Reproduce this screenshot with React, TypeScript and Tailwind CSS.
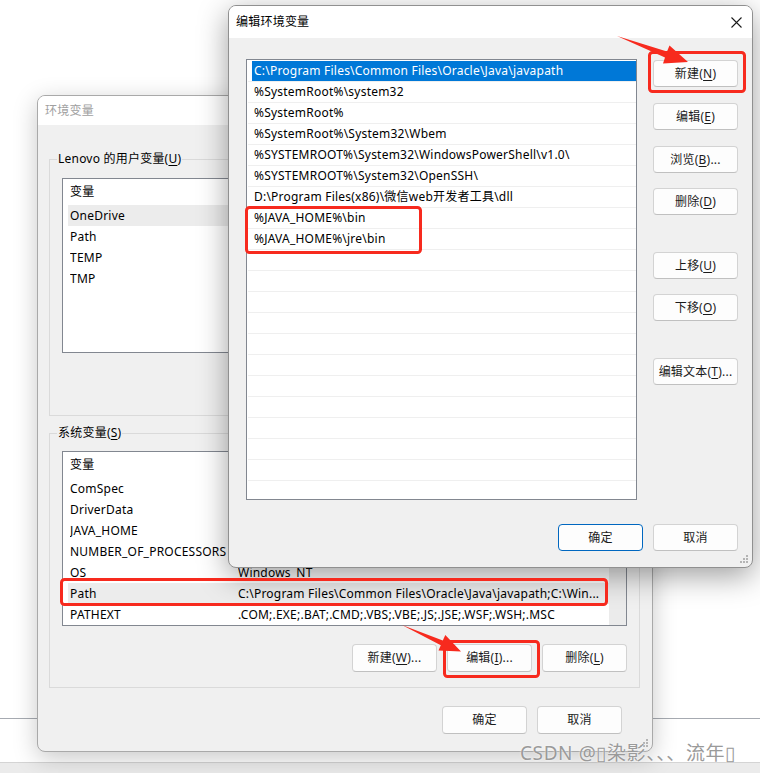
import type { ReactNode } from 'react';

function Key({ children }: { children: ReactNode }) {
  return <span className="underline underline-offset-[2px]">{children}</span>;
}

function Btn({
  children,
  primary = false,
  tall = false,
}: {
  children: ReactNode;
  primary?: boolean;
  tall?: boolean;
}) {
  return (
    <button
      className={`flex w-[85px] shrink-0 items-center justify-center rounded-[4px] border bg-[#fdfdfd] text-[12px] text-[#1b1b1b] ${
        tall ? 'h-[28px]' : 'h-[27px]'
      } ${primary ? 'border-[#0067c0]' : 'border-[#d3d3d3] border-b-[#c0c0c0]'}`}
    >
      {children}
    </button>
  );
}

function Grip() {
  return (
    <svg className="absolute right-[3px] bottom-[3px]" width="9" height="9" viewBox="0 0 9 9">
      {[
        [7, 1],
        [4, 4],
        [7, 4],
        [1, 7],
        [4, 7],
        [7, 7],
      ].map(([x, y]) => (
        <rect key={`${x}-${y}`} x={x - 1} y={y - 1} width="2" height="2" fill="#b4b4b4" />
      ))}
    </svg>
  );
}

// values under the edit dialog are not visible, so they are left out
const userVars = [
  { name: 'OneDrive', value: '', selected: true },
  { name: 'Path', value: '' },
  { name: 'TEMP', value: '' },
  { name: 'TMP', value: '' },
];

const systemVars = [
  { name: 'ComSpec', value: '' },
  { name: 'DriverData', value: '' },
  { name: 'JAVA_HOME', value: '' },
  { name: 'NUMBER_OF_PROCESSORS', value: '' },
  { name: 'OS', value: 'Windows_NT' },
  {
    name: 'Path',
    value: 'C:\\Program Files\\Common Files\\Oracle\\Java\\javapath;C:\\Win...',
    selected: true,
  },
  { name: 'PATHEXT', value: '.COM;.EXE;.BAT;.CMD;.VBS;.VBE;.JS;.JSE;.WSF;.WSH;.MSC' },
];

const paths = [
  'C:\\Program Files\\Common Files\\Oracle\\Java\\javapath',
  '%SystemRoot%\\system32',
  '%SystemRoot%',
  '%SystemRoot%\\System32\\Wbem',
  '%SYSTEMROOT%\\System32\\WindowsPowerShell\\v1.0\\',
  '%SYSTEMROOT%\\System32\\OpenSSH\\',
  'D:\\Program Files(x86)\\微信web开发者工具\\dll',
  '%JAVA_HOME%\\bin',
  '%JAVA_HOME%\\jre\\bin',
];

function VarList({
  rows,
  scrollbar = false,
}: {
  rows: { name: string; value: string; selected?: boolean }[];
  scrollbar?: boolean;
}) {
  return (
    <div className="flex h-[175px] border border-[#828790] bg-white">
      <div className="ml-[5px] flex min-w-0 flex-1 flex-col">
        <div className="flex h-[26px] shrink-0 items-center pl-[2px]">
          <span className="w-[168px]">变量</span>
        </div>
        {rows.map((r) => (
          <div
            key={r.name}
            className={`flex h-[21px] shrink-0 items-center pl-[2px] whitespace-nowrap ${
              r.selected ? 'bg-[#ececec]' : ''
            }`}
          >
            <span className="w-[168px] shrink-0 overflow-hidden">{r.name}</span>
            <span className="overflow-hidden">{r.value}</span>
          </div>
        ))}
      </div>
      {scrollbar && <div className="w-[17px] shrink-0 bg-[#ebebeb]" />}
    </div>
  );
}

function EnvDialog() {
  return (
    <div className="absolute top-[95px] left-[37px] flex h-[657px] w-[616px] flex-col overflow-hidden rounded-[8px] border border-[#a9a9a9] bg-[#f0f0f0] shadow-[0_6px_24px_rgba(0,0,0,0.22)]">
      <div className="flex h-[29px] shrink-0 items-center bg-white pl-[7px] text-[#a0a0a0]">环境变量</div>
      <div className="flex flex-col pt-[26px] pr-[12px] pl-[11px]">
        <fieldset className="min-w-0 border border-[#dadada] px-[12px] pb-[17px]">
          <legend className="-ml-[5px] px-[1px] leading-[16px]">
            Lenovo 的用户变量(<Key>U</Key>)
          </legend>
          <div className="mt-[11px]">
            <VarList rows={userVars} />
          </div>
          <div className="mt-[17px] flex justify-end gap-[10px]">
            <Btn tall>
              新建(<Key>N</Key>)...
            </Btn>
            <Btn tall>
              编辑(<Key>E</Key>)...
            </Btn>
            <Btn tall>
              删除(<Key>D</Key>)
            </Btn>
          </div>
        </fieldset>
        <fieldset className="mt-[9px] min-w-0 border border-[#dadada] px-[12px] pb-[15px]">
          <legend className="-ml-[5px] px-[1px] leading-[16px]">
            系统变量(<Key>S</Key>)
          </legend>
          <div className="mt-[10px]">
            <VarList rows={systemVars} scrollbar />
          </div>
          <div className="mt-[18px] flex justify-end gap-[10px]">
            <Btn tall>
              新建(<Key>W</Key>)...
            </Btn>
            <Btn tall>
              编辑(<Key>I</Key>)...
            </Btn>
            <Btn tall>
              删除(<Key>L</Key>)
            </Btn>
          </div>
        </fieldset>
        <div className="mt-[18px] flex justify-end gap-[10px] pr-[18px]">
          <Btn tall>确定</Btn>
          <Btn tall>取消</Btn>
        </div>
      </div>
      <Grip />
    </div>
  );
}

function EditDialog() {
  const empty = Array.from({ length: 11 }, (_, i) => i);
  return (
    <div className="absolute top-[5px] left-[228px] flex h-[563px] w-[525px] flex-col overflow-hidden rounded-[8px] border border-[#909090] bg-[#f0f0f0] shadow-[0_8px_30px_rgba(0,0,0,0.38)]">
      <div className="flex h-[32px] shrink-0 items-center justify-between bg-white pr-[9px] pl-[7px]">
        <span>编辑环境变量</span>
        <svg width="11" height="11" viewBox="0 0 11 11" className="mr-[1px]">
          <path d="M0.5 0.5 L10.5 10.5 M10.5 0.5 L0.5 10.5" stroke="#1b1b1b" strokeWidth="1.1" />
        </svg>
      </div>
      <div className="flex flex-col pt-[21px] pr-[14px] pl-[17px]">
        <div className="flex gap-[16px]">
          <div className="h-[441px] w-[391px] shrink-0 border border-[#828790] bg-white pt-[1px] pl-[1px]">
            {paths.map((p, i) => (
              <div key={p} className="h-[21px] border-b border-[#efefef]">
                {i === 0 ? (
                  <div className="ml-[4px] h-[20px] bg-[#0078d7] pl-[2px] leading-[20px] whitespace-nowrap text-white">{p}</div>
                ) : (
                  <div className="pl-[6px] leading-[20px] whitespace-nowrap">{p}</div>
                )}
              </div>
            ))}
            {empty.map((i) => (
              <div key={i} className="h-[21px] border-b border-[#efefef]" />
            ))}
          </div>
          <div className="mt-[1px] flex flex-col">
            <Btn>
              新建(<Key>N</Key>)
            </Btn>
            <div className="mt-[16px]">
              <Btn>
                编辑(<Key>E</Key>)
              </Btn>
            </div>
            <div className="mt-[16px]">
              <Btn>
                浏览(<Key>B</Key>)...
              </Btn>
            </div>
            <div className="mt-[15px]">
              <Btn>
                删除(<Key>D</Key>)
              </Btn>
            </div>
            <div className="mt-[37px]">
              <Btn>
                上移(<Key>U</Key>)
              </Btn>
            </div>
            <div className="mt-[15px]">
              <Btn>
                下移(<Key>O</Key>)
              </Btn>
            </div>
            <div className="mt-[37px]">
              <Btn>
                编辑文本(<Key>T</Key>)...
              </Btn>
            </div>
          </div>
        </div>
        <div className="mt-[24px] flex justify-end gap-[10px]">
          <Btn primary>确定</Btn>
          <Btn>取消</Btn>
        </div>
      </div>
      <Grip />
    </div>
  );
}

function Annotations() {
  const red = '#f72a1e';
  return (
    <svg className="pointer-events-none absolute inset-0" width="760" height="773" viewBox="0 0 760 773">
      <g fill="none" stroke={red} strokeWidth="3">
        <rect x="649.5" y="52.5" width="95" height="39" rx="3" />
        <rect x="246.5" y="207.5" width="174" height="45" rx="3" />
        <rect x="61.5" y="579.5" width="545" height="25" rx="3" />
        <rect x="444.5" y="641.5" width="94" height="35" rx="3" />
      </g>
      <polygon points="617,36 667,51.5 669.5,45.5 688,62 663,63.5 665,57.5" fill={red} />
      <polygon points="402,625 442.8,640.5 445.3,635 461,651.5 438.5,650.5 440.8,645.3" fill={red} />
    </svg>
  );
}

export default function App() {
  return (
    <div className="relative h-[773px] w-[760px] overflow-hidden bg-white font-['Noto_Sans','Noto_Sans_CJK_SC',sans-serif] text-[12px] tracking-[0.22px] text-black">
      <div className="h-[719px] border-b border-[#a6aab1]" />
      <div className="h-[43px]" />
      <div className="h-[11px] border-t border-[#d4d4d4] bg-[#ebebeb]" />
      <EnvDialog />
      <EditDialog />
      <Annotations />
      <div className="pointer-events-none absolute top-[741px] left-[520px] text-[19px] leading-[24px] tracking-[0.6px] whitespace-nowrap text-[#9a9a9a] [text-shadow:0_0_2px_#fff]">
        CSDN @▯染影、、、流年▯
      </div>
    </div>
  );
}
